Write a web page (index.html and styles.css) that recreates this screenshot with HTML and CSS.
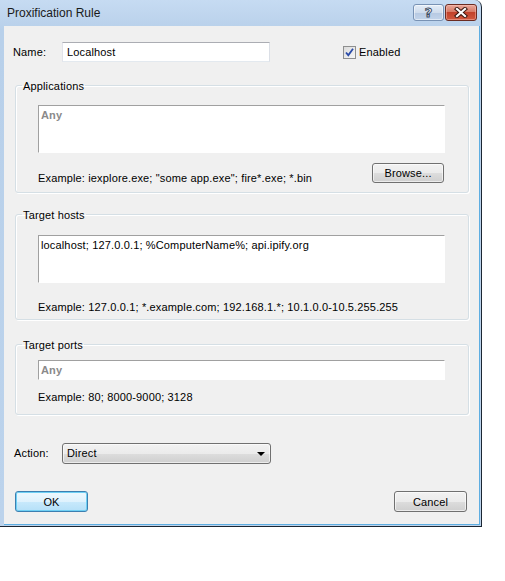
FILE: index.html
```html
<!DOCTYPE html>
<html lang="en">

<head>
    <meta charset="UTF-8">
    <meta name="viewport" content="width=device-width, initial-scale=1.0">
    <title>Proxification Rule</title>
    <link rel="stylesheet" href="styles.css">
</head>

<body>
    <div class="window">
        <!-- Thanh tiêu đề -->
        <div class="titlebar">
            <span class="title">Proxification Rule</span>
            <div class="caption">
                <button class="cap help"><span>?</span></button>
                <button class="cap close">
                    <svg width="14" height="11" viewBox="0 0 14 11">
                        <path d="M3 2 L11 9 M11 2 L3 9" stroke="#3b1710" stroke-width="4.2" stroke-linecap="square" fill="none" />
                        <path d="M3 2 L11 9 M11 2 L3 9" stroke="#ffffff" stroke-width="2.2" stroke-linecap="square" fill="none" />
                    </svg>
                </button>
            </div>
        </div>

        <div class="client">
            <div class="name-row">
                <span class="lbl">Name:</span>
                <div class="edit name-edit">Localhost</div>
                <label class="check">
                    <span class="box">
                        <svg width="11" height="11" viewBox="0 0 11 11">
                            <path d="M2 5.5 L4.3 8.2 L9 1.8" stroke="#2a4ba8" stroke-width="1.8" fill="none" />
                        </svg>
                    </span>
                    Enabled
                </label>
            </div>

            <fieldset class="group apps">
                <legend>Applications</legend>
                <div class="edit memo"><span class="any">Any</span></div>
                <div class="example-row">
                    <span class="example">Example: iexplore.exe; "some app.exe"; fire*.exe; *.bin</span>
                    <button class="btn browse">Browse...</button>
                </div>
            </fieldset>

            <fieldset class="group hosts">
                <legend>Target hosts</legend>
                <div class="edit memo">localhost; 127.0.0.1; %ComputerName%; api.ipify.org</div>
                <div class="example">Example: 127.0.0.1; *.example.com; 192.168.1.*; 10.1.0.0-10.5.255.255</div>
            </fieldset>

            <fieldset class="group ports">
                <legend>Target ports</legend>
                <div class="edit line"><span class="any">Any</span></div>
                <div class="example">Example: 80; 8000-9000; 3128</div>
            </fieldset>

            <div class="action-row">
                <span class="lbl">Action:</span>
                <div class="combo">Direct</div>
            </div>

            <div class="buttons">
                <button class="btn default">OK</button>
                <button class="btn">Cancel</button>
            </div>
        </div>
    </div>
</body>

</html>
```

FILE: styles.css
```css
body {
    margin: 0;
    background: #ffffff;
    font-family: "Liberation Sans", Arial, sans-serif;
    font-size: 11px;
    letter-spacing: 0.15px;
    color: #000000;
}

/* Khung cửa sổ */
.window {
    width: 482px;
    height: 527px;
    box-sizing: border-box;
    display: flex;
    flex-direction: column;
    padding: 0 1px 1px 4px;
    background: linear-gradient(#c6dbf2, #b8d0ea 30px, #bcd3ec);
    border-right: 1px solid #1b2633;
    border-bottom: 1px solid #1b2633;
    border-top-right-radius: 7px;
}

.titlebar {
    height: 26px;
    display: flex;
    align-items: flex-start;
    justify-content: space-between;
}

.title {
    margin: 6px 0 0 3px;
    font-size: 12px;
    line-height: 15px;
    letter-spacing: 0;
    color: #1a1a1a;
}

.caption {
    display: flex;
    gap: 1px;
    margin: 4px 3px 0 0;
}

.cap {
    height: 17px;
    padding: 0;
    border-radius: 3px;
    display: flex;
    align-items: center;
    justify-content: center;
    cursor: pointer;
}

.help {
    width: 31px;
    border: 1px solid #7892b4;
    background: linear-gradient(#e4edf8, #cfdcec 50%, #b6c9e2 51%, #c2d4ea);
    box-shadow: inset 0 0 0 1px rgba(255, 255, 255, 0.5);
}

.help span {
    font-family: "DejaVu Sans", sans-serif;
    font-weight: bold;
    font-size: 13px;
    color: #ffffff;
    -webkit-text-stroke: 1px #3d4c63;
    line-height: 13px;
}

.close {
    width: 32px;
    border: 1px solid #6b2c22;
    background: linear-gradient(#e8a89a, #d77a66 45%, #c2422b 50%, #d0593f);
    box-shadow: inset 0 0 0 1px rgba(255, 200, 190, 0.45);
}

/* Vùng nội dung */
.client {
    flex: 1;
    background: #f0f0f0;
    padding: 16px 0 0 9px;
    border-right: 1px solid #5eaee2;
    border-bottom: 1px solid #5eaee2;
}

.lbl {
    display: inline-block;
    width: 49px;
    line-height: 20px;
}

.name-row {
    display: flex;
    align-items: flex-start;
}

.edit {
    background: #ffffff;
    box-sizing: border-box;
    padding: 0 3px;
    line-height: 16px;
}

.name-edit {
    width: 208px;
    height: 20px;
    padding-top: 1px;
    padding-left: 4px;
    border: 1px solid;
    border-color: #abadb3 #dbdfe6 #e3e9ef #e2e3ea;
}

.check {
    display: flex;
    align-items: center;
    gap: 3px;
    margin: 4px 0 0 73px;
    line-height: 13px;
}

.box {
    width: 13px;
    height: 13px;
    box-sizing: border-box;
    border: 1px solid #8e8f8f;
    background: linear-gradient(135deg, #dcdcdc, #f6f6f6);
    display: flex;
    align-items: center;
    justify-content: center;
}

/* Khung nhóm */
.group {
    margin: 17px 0 0 2px;
    width: 454px;
    box-sizing: border-box;
    padding: 13px 22px 7px 22px;
    border: 1px solid #d5dfe5;
    border-radius: 3px;
    box-shadow: inset 1px 1px 0 #ffffff, 1px 1px 0 #ffffff;
}

.group legend {
    padding: 0 1px;
    margin-left: -16px;
    line-height: 13px;
    position: relative;
    top: 1px;
}

.hosts {
    margin-top: 15px;
    padding-top: 14px;
    padding-bottom: 5px;
}

.ports {
    margin-top: 18px;
    padding-top: 9px;
    padding-bottom: 10px;
}

.memo,
.line {
    width: 407px;
    border-top: 1px solid #a0a0a0;
    border-left: 1px solid #a0a0a0;
    border-right: 1px solid #ffffff;
    border-bottom: 1px solid #ffffff;
    padding: 1px 2px;
}

.memo {
    height: 48px;
}

.line {
    height: 20px;
}

.any {
    font-weight: bold;
    color: #8a8a8a;
}

.example {
    line-height: 13px;
}

.hosts .example {
    margin-top: 18px;
}

.ports .example {
    margin-top: 11px;
}

.example-row {
    display: flex;
    justify-content: space-between;
    align-items: flex-start;
    margin-top: 10px;
}

.example-row .example {
    margin-top: 9px;
}

/* Nút bấm */
.btn {
    width: 73px;
    height: 21px;
    padding: 0;
    font-family: "Liberation Sans", Arial, sans-serif;
    font-size: 11px;
    letter-spacing: 0.15px;
    color: #000000;
    border: 1px solid #707070;
    border-radius: 3px;
    background: linear-gradient(#f2f2f2, #ebebeb 50%, #dddddd 51%, #cfcfcf);
    box-shadow: inset 0 0 0 1px rgba(255, 255, 255, 0.6);
    cursor: pointer;
}

.browse {
    width: 72px;
    height: 20px;
    margin-right: 2px;
}

.btn.default {
    border-color: #3c7fb1;
    background: linear-gradient(#eef8fe, #dff2fd 50%, #c8e9fc 51%, #b5e0f8);
    box-shadow: inset 0 0 0 1px #6fd0f4;
}

.action-row {
    display: flex;
    margin-top: 28px;
    padding-left: 1px;
}

.action-row .lbl {
    width: 48px;
    line-height: 21px;
}

.combo {
    position: relative;
    width: 209px;
    height: 21px;
    box-sizing: border-box;
    padding-left: 4px;
    line-height: 19px;
    border: 1px solid #707070;
    border-radius: 3px;
    background: linear-gradient(#f2f2f2, #ebebeb 50%, #dddddd 51%, #cfcfcf);
    box-shadow: inset 0 0 0 1px rgba(255, 255, 255, 0.6);
}

/* Mũi tên xổ xuống */
.combo::after {
    content: "";
    position: absolute;
    right: 5px;
    top: 8px;
    border-left: 4px solid transparent;
    border-right: 4px solid transparent;
    border-top: 4px solid #000000;
}

.buttons {
    display: flex;
    justify-content: space-between;
    margin: 27px 12px 0 2px;
}
```
